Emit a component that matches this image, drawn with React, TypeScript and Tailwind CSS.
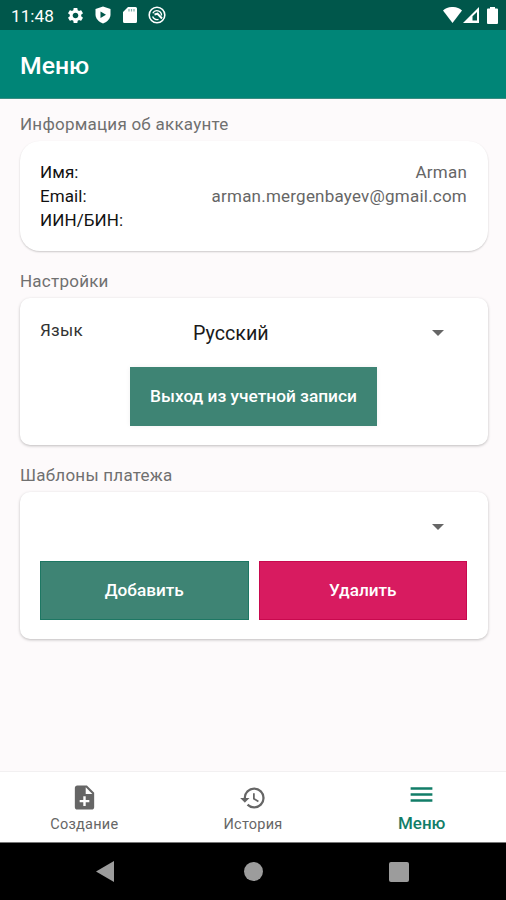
import type { ReactNode } from 'react';
import { MdHistory, MdMenu, MdNoteAdd, MdSettings } from 'react-icons/md';

function ShieldIcon() {
  return (
    <svg viewBox="0 0 16 18" className="w-4 h-[18px]">
      <path d="M8 .5 15.500 3v5.500c0 4-3 7.300-7.500 9-4.500-1.700-7.500-5-7.500-9V3z" fill="#fff" />
      <path d="M5.500 5.500v6.500l5.500-3.250z" fill="#00574b" />
    </svg>
  );
}

function SdCardIcon() {
  return (
    <svg viewBox="0 0 14 16" className="w-3.5 h-4">
      <path d="M5 0h7.500A1.500 1.500 0 0 1 14 1.500v13a1.500 1.500 0 0 1-1.500 1.500h-11A1.500 1.500 0 0 1 0 14.500V5z" fill="#fff" />
      <path d="M6 2v2.600M8.500 2v2.600M11 2v2.600" stroke="#7fb0a9" strokeWidth="1.200" />
    </svg>
  );
}

function SyncIcon() {
  return (
    <svg viewBox="0 0 18 18" className="w-[18px] h-[18px]" fill="none" stroke="#fff">
      <circle cx="9" cy="9" r="7.800" strokeWidth="1.600" />
      <path d="M4.800 7.200A4.600 4.600 0 0 1 13.500 9.500" strokeWidth="1.400" />
      <path d="M4.600 10.500A4.600 4.600 0 0 0 10.500 13.300" strokeWidth="1.400" />
      <path d="m6.500 8.500 3-.8 4.500 4.800" strokeWidth="2" />
    </svg>
  );
}

function StatusBar() {
  return (
    <div className="h-[30px] shrink-0 bg-[#00574b] flex items-center pl-[11px] pr-2 text-white">
      <span className="w-[43px] text-[17.200px] leading-none whitespace-nowrap pt-[3px]">11:48</span>
      <div className="flex items-center ml-3">
        <MdSettings size={19} />
        <div className="ml-[10px]"><ShieldIcon /></div>
        <div className="ml-3"><SdCardIcon /></div>
        <div className="ml-[11px]"><SyncIcon /></div>
      </div>
      <div className="flex items-center ml-auto">
        <svg viewBox="0 0 19 16" className="w-[19px] h-4" fill="#fff">
          <path d="M0 3.500C5-1.200 14-1.200 19 3.500L9.500 16z" />
        </svg>
        <svg viewBox="0 0 16 16" className="w-4 h-4 ml-px">
          <path d="M0 16 16 0v16z" fill="#fff" />
          <path d="M9.500 9.300 14 5v8.500H9.500z" fill="#00574b" />
        </svg>
        <svg viewBox="0 0 11 17" className="w-[11px] h-[17px] ml-2" fill="#fff">
          <path d="M3 0h5v1.500h2q1 0 1 1V16q0 1-1 1H1q-1 0-1-1V2.500q0-1 1-1h2z" />
        </svg>
      </div>
    </div>
  );
}

function SectionTitle({ children }: { children: ReactNode }) {
  return (
    <h2 className="text-[17px] leading-5 tracking-[0.240px] text-[#707070] whitespace-nowrap">
      {children}
    </h2>
  );
}

function InfoRow({ label, value }: { label: string; value?: string }) {
  return (
    <div className="flex justify-between h-6 leading-6 text-[17px]">
      <span className="text-[#111] tracking-[0.100px]">{label}</span>
      <span className="text-[#666] tracking-[0.220px]">{value}</span>
    </div>
  );
}

function Caret() {
  return (
    <svg viewBox="0 0 12 6" className="w-3 h-1.5" fill="#666">
      <path d="M0 0h12L6 6z" />
    </svg>
  );
}

function NavItem({ icon, label, active }: { icon: ReactNode; label: string; active?: boolean }) {
  return (
    <button
      className={`flex-1 flex flex-col items-center ${
        active ? 'pt-2 text-[#127d68] text-[17px]' : 'pt-[11px] text-[#666] text-[14.500px] tracking-[0.240px]'
      }`}
    >
      <span className="h-[29px] flex items-center">{icon}</span>
      <span className={active ? 'leading-5 mt-1 font-medium' : 'leading-5 mt-[3px]'}>{label}</span>
    </button>
  );
}

function App() {
  return (
    <div className="w-[506px] h-[900px] flex flex-col overflow-hidden bg-[#fdfafb] font-['Roboto',sans-serif]">
      <StatusBar />

      <header className="h-[69px] shrink-0 bg-[#008577] border-b border-[#3b8c82] flex items-center pl-5">
        <h1 className="text-[24.800px] font-medium text-white pt-1">Меню</h1>
      </header>

      <main className="flex-1 pl-5 pr-[18px] pt-[15px]">
        <SectionTitle>Информация об аккаунте</SectionTitle>
        <section className="mt-[7px] h-[110px] pl-5 pr-[21px] pt-[19px] bg-white rounded-[20px] shadow-[0_1px_2px_rgba(0,0,0,0.2)]">
          <InfoRow label="Имя:" value="Arman" />
          <InfoRow label="Email:" value="arman.mergenbayev@gmail.com" />
          <InfoRow label="ИИН/БИН:" />
        </section>

        {/* Настройки */}
        <div className="mt-5"><SectionTitle>Настройки</SectionTitle></div>
        <section className="mt-[7px] h-[147px] pl-5 pr-[21px] bg-white rounded-[10px] shadow-[0_1px_3px_rgba(0,0,0,0.25)]">
          <div className="h-[69px] flex items-center pr-[23px]">
            <span className="w-[153px] text-[17px] tracking-[0.300px] text-[#333] pb-1">Язык</span>
            <span className="text-[19.700px] text-[#1a1a1a] pt-0.5">Русский</span>
            <div className="ml-auto"><Caret /></div>
          </div>
          <button className="block ml-[90px] w-[247px] h-[59px] bg-[#3e8474] text-white text-[17.300px] font-medium whitespace-nowrap shadow-[0_0_5px_rgba(0,0,0,0.06)]">
            Выход из учетной записи
          </button>
        </section>

        {/* Шаблоны */}
        <div className="mt-5"><SectionTitle>Шаблоны платежа</SectionTitle></div>
        <section className="mt-[7px] h-[147px] pl-5 pr-[21px] bg-white rounded-[10px] shadow-[0_1px_3px_rgba(0,0,0,0.25)]">
          <div className="h-[69px] flex items-center justify-end pr-[23px]">
            <Caret />
          </div>
          <div className="flex gap-2.5 h-[59px] text-white text-[17.200px] font-medium">
            <button className="flex-1 bg-[#3e8474] border border-[#1d7763]">Добавить</button>
            <button className="flex-1 bg-[#d81b60] border border-[#c8094e]">Удалить</button>
          </div>
        </section>
      </main>

      <nav className="h-[71px] shrink-0 bg-white border-t border-[#f2f0f1] flex">
        <NavItem icon={<MdNoteAdd size={29} />} label="Создание" />
        <NavItem icon={<MdHistory size={28} />} label="История" />
        <NavItem icon={<MdMenu size={29} />} label="Меню" active />
      </nav>

      <div className="h-[58px] shrink-0 bg-black border-t border-[#777] flex items-center pl-24">
        <svg viewBox="0 0 18 21" className="w-[18px] h-[21px]" fill="#9c9c9c">
          <path d="M18 0v21L0 10.500z" />
        </svg>
        <div className="ml-[130px] w-[19px] h-[19px] rounded-full bg-[#9c9c9c]" />
        <div className="ml-[126px] w-5 h-5 rounded-[2px] bg-[#9c9c9c]" />
      </div>
    </div>
  );
}

export default App;
